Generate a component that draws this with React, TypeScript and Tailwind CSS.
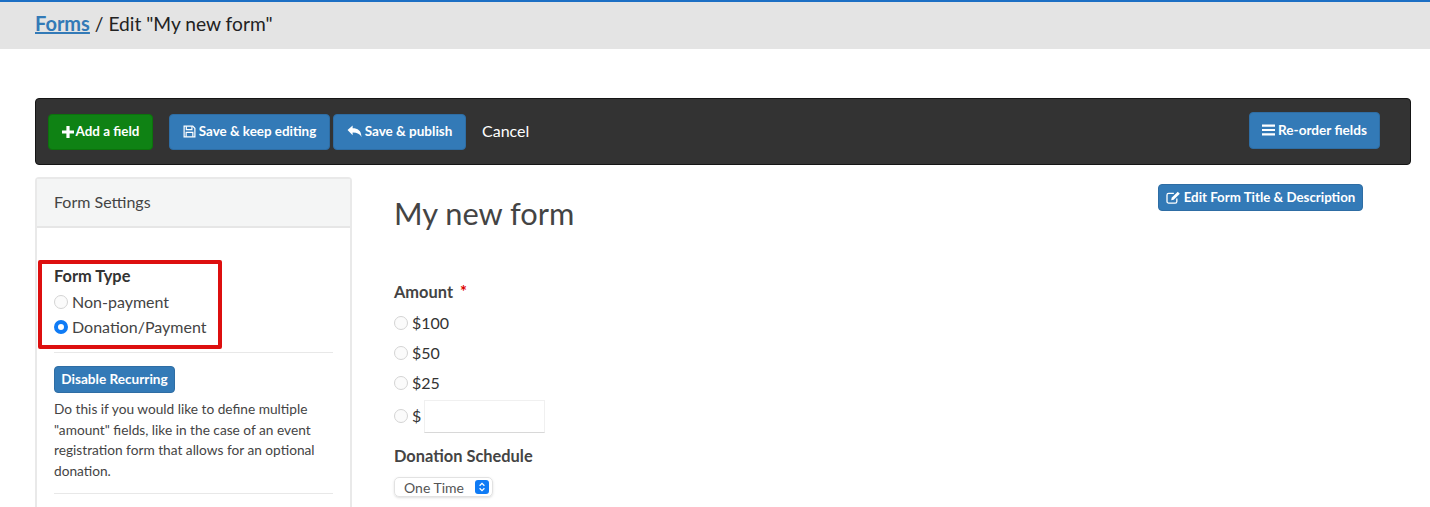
import React from "react";

const font = "font-['Lato','Noto_Sans',sans-serif]";

const PlusIcon = () => (
  <svg viewBox="0 0 12 12" className="w-[12px] h-[12px]" fill="currentColor">
    <path d="M4.4 0h3.2v4.4H12v3.2H7.6V12H4.4V7.6H0V4.4h4.4z" />
  </svg>
);

const BarsIcon = () => (
  <svg viewBox="0 0 13 12" className="w-[13px] h-[12px]" fill="currentColor">
    <path d="M0 0.5h13v2.2H0zM0 4.9h13v2.2H0zM0 9.3h13v2.2H0z" />
  </svg>
);

const SaveIcon = () => (
  <svg viewBox="0 0 14 14" className="w-[13px] h-[13px]" fill="none" stroke="currentColor" strokeWidth="1.3">
    <path d="M1.2 1.2h9.3l2.3 2.3v9.3H1.2z" />
    <path d="M3.6 1.4v3.5h6V1.4M3.4 12.6V8h7.2v4.6" />
  </svg>
);

const ReplyIcon = () => (
  <svg viewBox="0 0 16 14" className="w-[15px] h-[13px]" fill="currentColor">
    <path d="M0.5 5.5 6 0.6v3C11.5 3.6 15.2 6 15.5 13 14 9.6 11 8 6 8v3z" />
  </svg>
);

const EditIcon = () => (
  <svg viewBox="0 0 16 14" className="w-[15px] h-[13px]" fill="none" stroke="currentColor" strokeWidth="1.4">
    <path d="M11.6 8.2v3a1.8 1.8 0 0 1-1.8 1.8H2.8A1.8 1.8 0 0 1 1 11.2V4.4a1.8 1.8 0 0 1 1.8-1.8h5.6" />
    <path d="M6 7.2 12.6 0.8l2.2 2.2-6.6 6.5-2.7.5z" fill="currentColor" stroke="none" />
  </svg>
);

const Radio = ({ checked }: { checked?: boolean }) =>
  checked ? (
    <span className="w-[14px] h-[14px] rounded-full border-[4px] border-[#0f7bf5] bg-white shrink-0" />
  ) : (
    <span className="w-[14px] h-[14px] rounded-full border border-[#d4d4d4] bg-[#fbfbfb] shrink-0" />
  );

const BlueButton = ({ children, className }: { children: React.ReactNode; className: string }) => (
  <button className={`flex items-center justify-center gap-[3px] rounded-[4px] border border-[#2e6da4] bg-[#337ab7] text-white ${className}`}>
    {children}
  </button>
);

const AmountRow = ({ label }: { label: string }) => (
  <div className="flex items-center gap-[4px] h-[30px] text-[16px] text-[#333]">
    <Radio />
    <span>{label}</span>
  </div>
);

export default function App() {
  return (
    <div className={`${font} w-[1430px] h-[507px] overflow-hidden bg-white text-[#333]`}>
      {/* Header */}
      <div className="h-[49px] bg-[#e4e4e4] border-t-2 border-[#1c6fc4] pl-[35px] pt-[8px] text-[19.2px] leading-[26px] text-[#222]">
        <a className="font-bold text-[20px] text-[#337ab7] underline">Forms</a> / Edit "My new form"
      </div>

      {/* Toolbar */}
      <div className="mt-[49px] mx-[35px] w-[1376px] h-[67px] flex items-center rounded-[4px] border border-[#151515] bg-[#333] pl-[12px] pr-[30px]">
        <button className="w-[105px] h-[36px] flex items-center justify-center gap-[2px] rounded-[4px] border border-[#0c720c] bg-[#0f8214] text-white text-[13.4px] font-bold">
          <PlusIcon />
          Add a field
        </button>
        <BlueButton className="ml-[16px] w-[161px] h-[36px] text-[13.4px] font-bold">
          <SaveIcon />
          Save &amp; keep editing
        </BlueButton>
        <BlueButton className="ml-[3px] w-[133px] h-[36px] text-[13.5px] font-bold">
          <ReplyIcon />
          Save &amp; publish
        </BlueButton>
        <span className="ml-[16px] -mt-[2px] text-[16px] text-white">Cancel</span>
        <BlueButton className="ml-auto w-[131px] h-[37px] -mt-[3px] text-[13.6px] font-bold">
          <BarsIcon />
          Re-order fields
        </BlueButton>
      </div>

      <div className="flex mt-[12px] ml-[35px]">
        {/* Form settings */}
        <div className="relative w-[317px] h-[340px] rounded-t-[4px] border-2 border-b-0 border-[#e9e9e9]">
          <div className="h-[49px] flex items-center pl-[17px] pb-[2px] bg-[#f4f5f5] border-b-2 border-[#e6e6e6] text-[16px] text-[#444]">
            Form Settings
          </div>
          <div className="px-[17px]">
            <div className="pt-[37px] text-[16.4px] font-bold leading-[22px] text-[#333]">Form Type</div>
            <div className="flex items-center gap-[4px] h-[25px] mt-[2px] text-[16px] text-[#444]">
              <Radio />
              Non-payment
            </div>
            <div className="flex items-center gap-[4px] h-[25px] text-[16px] text-[#444]">
              <Radio checked />
              Donation/Payment
            </div>
            <div className="mt-[13px] h-px bg-[#e8e8e8]" />
            <BlueButton className="mt-[13px] w-[121px] h-[27px] text-[13.6px] font-bold">Disable Recurring</BlueButton>
            <p className="mt-[6px] text-[13.7px] leading-[20.5px] text-[#444] w-[280px]">
              Do this if you would like to define multiple "amount" fields, like in the case of an event registration
              form that allows for an optional donation.
            </p>
            <div className="mt-[12px] h-px bg-[#e8e8e8]" />
          </div>
          {/* annotation box */}
          <div className="absolute left-[1px] top-[81px] w-[184px] h-[89px] rounded-[2px] border-[4px] border-[#dd0f0f]" />
        </div>

        {/* Form preview */}
        <div className="ml-[42px] flex-1 pr-[67px]">
          <div className="flex items-start justify-between">
            <h1 className="pt-[15px] text-[30.8px] leading-[44px] text-[#444]">My new form</h1>
            <BlueButton className="mt-[7px] w-[205px] h-[27px] text-[13.3px] font-bold">
              <EditIcon />
              Edit Form Title &amp; Description
            </BlueButton>
          </div>
          <div className="mt-[45px] text-[16.4px] font-bold leading-[22px] text-[#444]">
            Amount <span className="ml-[3px] text-[#d00]">*</span>
          </div>
          <div className="mt-[5px]">
            <AmountRow label="$100" />
            <AmountRow label="$50" />
            <AmountRow label="$25" />
          </div>
          <div className="flex items-center gap-[4px] h-[34px] mt-[1px] text-[16px] text-[#333]">
            <Radio />
            <span>$</span>
            <div className="-ml-[1px] w-[121px] h-[33px] border border-[#f0f0f0] border-b-[#d8d8d8] bg-white" />
          </div>
          <div className="mt-[12px] text-[16.4px] font-bold leading-[22px] text-[#444]">Donation Schedule</div>
          <div className="mt-[10px] w-[99px] h-[20px] flex items-center justify-between pl-[9px] pr-[3px] rounded-[5px] border border-[#e2e2e2] shadow-sm text-[14px] text-[#555]">
            One Time
            <span className="w-[14px] h-[14px] flex items-center justify-center rounded-[3px] bg-[#0f7bf5]">
              <svg viewBox="0 0 10 12" className="w-[8px] h-[10px]" fill="none" stroke="white" strokeWidth="1.6">
                <path d="M2 4.5 5 1.5l3 3M2 7.5l3 3 3-3" />
              </svg>
            </span>
          </div>
        </div>
      </div>
    </div>
  );
}
